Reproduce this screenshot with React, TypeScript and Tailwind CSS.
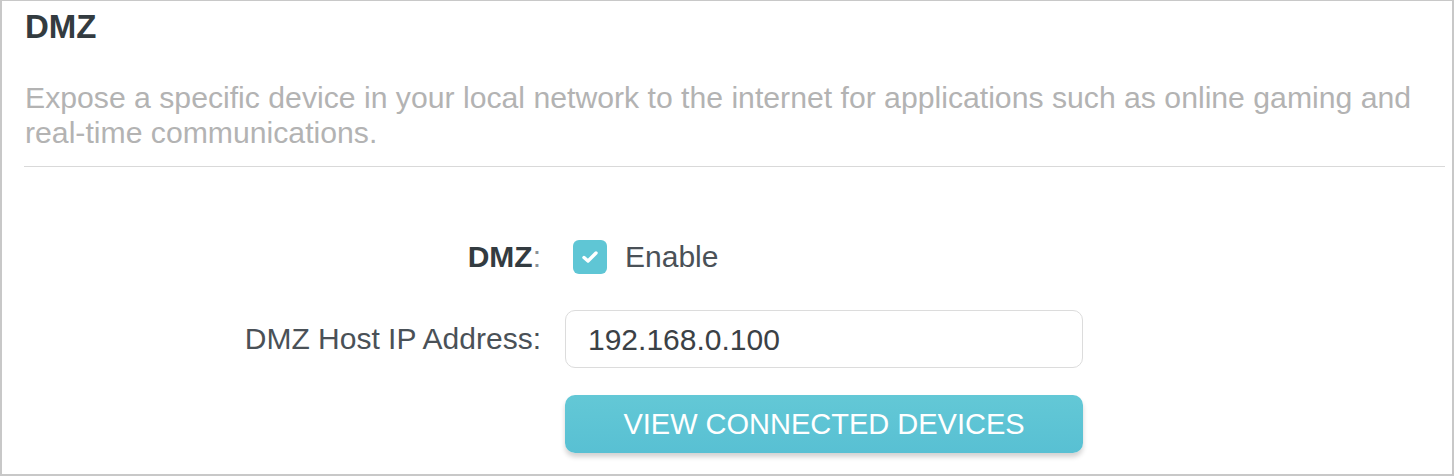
import React from "react";

export default function App() {
  return (
    <div
      className="w-[1454px] h-[476px] bg-white border-t border-b-2 border-x-2 border-[#c8c8c8] box-border overflow-hidden"
      style={{ fontFamily: '"Liberation Sans", Arial, sans-serif' }}
    >
      <div className="pl-[22px] pr-[7px] pt-[9px]">
        <h1 className="text-[33px] leading-[33px] font-bold text-[#333b40] pl-px">DMZ</h1>
        <p className="mt-[37px] text-[30.2px] leading-[35px] text-[#b3b3b3] pl-px">
          Expose a specific device in your local network to the internet for applications such as online gaming and real-time communications.
        </p>
        <div className="mt-[16px] h-px bg-[#d9d9d9]" />

        <div className="mt-[73px] flex items-center h-[34px]">
          <div className="w-[517px] text-right text-[30px] leading-[34px] text-[#333b40]">
            <span className="font-bold">DMZ</span>
            <span className="text-[#8a9096]">:</span>
          </div>
          <div className="ml-[32px] w-[34px] h-[34px] rounded-[6px] bg-[#5fc6d5] flex items-center justify-center">
            <svg width="18" height="14" viewBox="0 0 18 14">
              <polyline points="3,7.5 7,11 15,3" fill="none" stroke="white" strokeWidth="3.4" strokeLinecap="round" strokeLinejoin="round" />
            </svg>
          </div>
          <span className="ml-[18px] text-[30px] leading-[34px] text-[#4a5157]">Enable</span>
        </div>

        <div className="mt-[36px] flex items-center h-[58px]">
          <div className="w-[517px] text-right text-[30px] leading-[34px] text-[#4a5157]">
            DMZ Host IP Address:
          </div>
          <div className="ml-[24px] w-[518px] h-[58px] rounded-[10px] border border-[#dcdcdc] bg-white flex items-center pl-[22px] text-[30px] text-[#3b4146]">
            192.168.0.100
          </div>
        </div>

        <div className="mt-[27px] flex">
          <div className="w-[517px]" />
          <button className="ml-[24px] w-[518px] h-[58px] rounded-[10px] bg-gradient-to-b from-[#63c8d6] to-[#58c0d3] text-white text-[29px] leading-[58px] text-center shadow-[0_4px_5px_rgba(0,0,0,0.18)]">
            VIEW CONNECTED DEVICES
          </button>
        </div>
      </div>
    </div>
  );
}
